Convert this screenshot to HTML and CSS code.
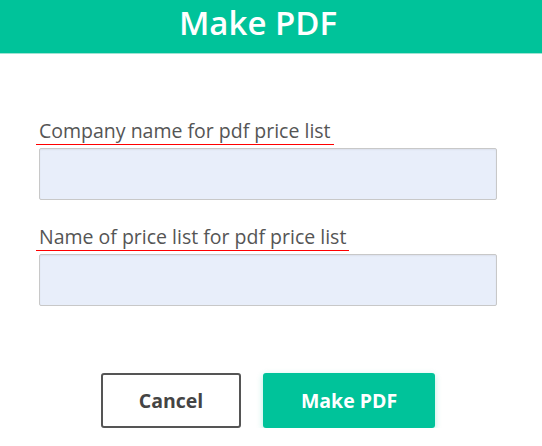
FILE: index.html
```html
<!DOCTYPE html>
<html lang="en">
<head>
<meta charset="utf-8">
<title>Make PDF</title>
<link rel="stylesheet" href="styles.css">
</head>
<body>
<div class="dialog">
  <header class="dialog-header">
    <h1 class="dialog-title">Make PDF</h1>
  </header>
  <form class="dialog-body">
    <div class="field first">
      <label class="field-label" for="company">Company name for pdf price list</label>
      <input class="field-input" id="company" type="text">
    </div>
    <div class="field">
      <label class="field-label" for="pricelist">Name of price list for pdf price list</label>
      <input class="field-input" id="pricelist" type="text">
    </div>
    <div class="actions">
      <button type="button" class="btn btn-cancel">Cancel</button>
      <button type="button" class="btn btn-primary">Make PDF</button>
    </div>
  </form>
</div>
</body>
</html>
```
FILE: styles.css
```css
html, body {
  margin: 0;
  padding: 0;
  background: #ffffff;
}
body {
  font-family: "Open Sans", "Noto Sans", sans-serif;
  color: #555555;
}
.dialog {
  width: 542px;
}
.dialog-header {
  background: #00c39a;
  height: 53px;
  border-bottom: 1px solid #9fe3d3;
  display: flex;
  justify-content: center;
  align-items: flex-start;
  padding-right: 26px;
}
.dialog-title {
  margin: 0;
  color: #ffffff;
  font-size: 33px;
  font-weight: 600;
  line-height: 45px;
}
.dialog-body {
  padding: 0 45px 0 39px;
  display: flex;
  flex-direction: column;
}
.field {
  display: flex;
  flex-direction: column;
  align-items: flex-start;
  margin-top: 24px;
}
.field.first {
  margin-top: 64px;
}
.field-label {
  display: block;
  font-size: 19.5px;
  line-height: 26px;
  color: #555555;
  margin: 0 0 3px -3px;
  padding: 0 3px 0 3px;
  border-bottom: 1px solid #ff0000;
}
.field-input {
  box-sizing: border-box;
  width: 100%;
  height: 52px;
  margin: 0;
  background: #e8eefa;
  border: 1px solid #c8c8c8;
  border-radius: 2px;
  box-shadow: inset 0 1px 2px rgba(0, 0, 0, 0.06);
  font-family: inherit;
  font-size: 16px;
}
.actions {
  display: flex;
  justify-content: center;
  gap: 22px;
  margin-top: 67px;
}
.btn {
  box-sizing: border-box;
  height: 55px;
  font-family: "Open Sans", "Noto Sans", sans-serif;
  font-size: 19.5px;
  font-weight: 700;
  border-radius: 3px;
  cursor: pointer;
}
.btn-cancel {
  width: 140px;
  background: #ffffff;
  color: #444444;
  border: 2px solid #555555;
}
.btn-primary {
  width: 172px;
  background: #00c39a;
  color: #ffffff;
  border: none;
  box-shadow: 0 2px 6px rgba(0, 195, 154, 0.3);
}
```
